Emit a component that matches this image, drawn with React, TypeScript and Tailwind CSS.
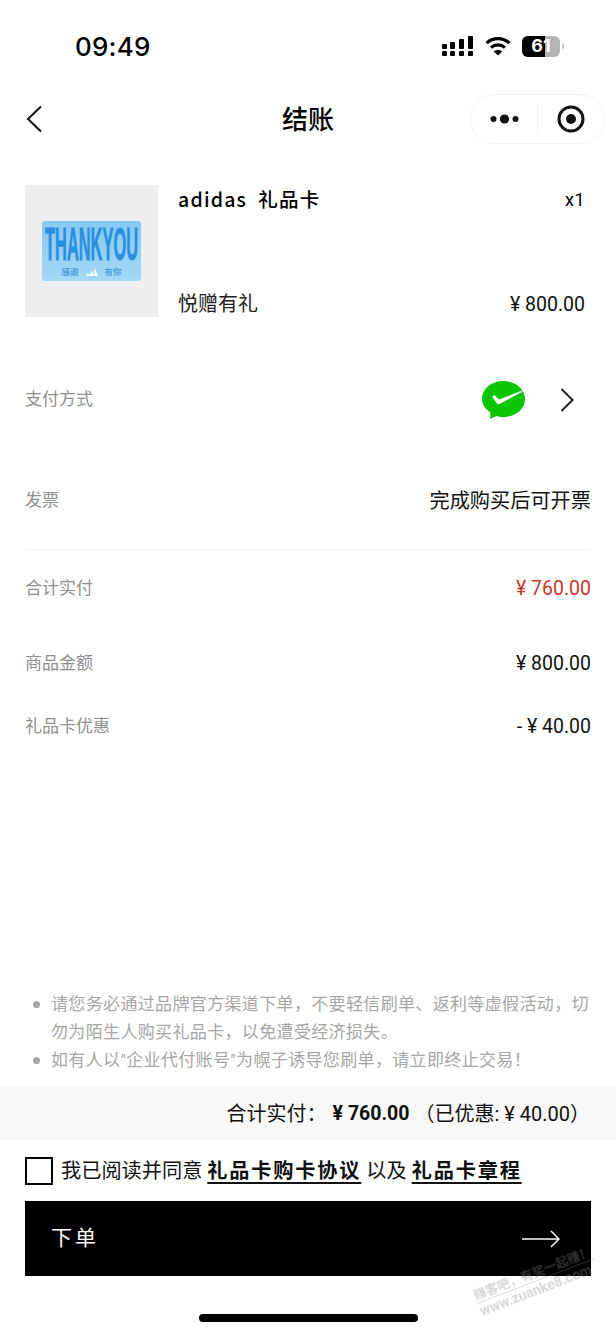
import React from 'react';

const StatusIcons = () => (
	<div className="flex items-center">
		<svg width="31" height="21" viewBox="0 0 31 21" fill="#000">
			<rect x="0" y="8" width="5" height="5" rx="1" />
			<rect x="0" y="15" width="5" height="5" rx="1" />
			<rect x="8" y="6" width="5" height="7" rx="1" />
			<rect x="8" y="15" width="5" height="5" rx="1" />
			<rect x="17" y="3" width="5" height="10" rx="1" />
			<rect x="17" y="15" width="5" height="5" rx="1" />
			<rect x="26" y="0" width="5" height="13" rx="1" />
			<rect x="26" y="15" width="5" height="5" rx="1" />
		</svg>
		<svg className="ml-[12px]" width="26" height="20" viewBox="0 0 26 20" fill="none" stroke="#000" strokeWidth="3.2">
			<path d="M1.5 7.2C8 1 18 1 24.5 7.2" />
			<path d="M6 11.6C10 8 16 8 20 11.6" />
			<path d="M13 19.5 L8.8 15.4C11 13.4 15 13.4 17.2 15.4Z" fill="#000" stroke="none" />
		</svg>
		<div className="flex items-center ml-[11px]">
			<div className="relative w-[38px] h-[21px] rounded-[6px] bg-[#b5b5b5] overflow-hidden">
				<div className="h-full w-[23px] bg-black" />
				<span className="absolute inset-0 flex items-center justify-center text-white text-[18px] leading-none font-bold font-['Inter',sans-serif]">
					61
				</span>
			</div>
			<div className="w-[2px] h-[6px] rounded-r-full bg-[#c4c4c4] ml-[2px]" />
		</div>
	</div>
);

const Row = ({ label, children, className }: { label: string; children: React.ReactNode; className: string }) => (
	<div className={`flex items-center justify-between ${className}`}>
		<span className="text-[17px] text-[#8f8f8f]">{label}</span>
		{children}
	</div>
);

const Amount = ({ children, className = 'text-[#111]' }: { children: React.ReactNode; className?: string }) => (
	<span className={`text-[19.5px] font-['Roboto',sans-serif] ${className}`}>{children}</span>
);

export default function App() {
	return (
		<div className="relative w-[616px] h-[1334px] bg-white flex flex-col overflow-hidden text-black font-['Roboto','Noto_Sans_CJK_SC',sans-serif]">
			{/* status bar */}
			<div className="h-[92px] flex items-center justify-between pl-[75px] pr-[52px] shrink-0">
				<span className="text-[26px] font-medium tracking-[0.2px] font-['Inter',sans-serif]">09:49</span>
				<StatusIcons />
			</div>

			{/* nav */}
			<div className="relative h-[54px] flex items-center justify-center shrink-0">
				<svg className="absolute left-[25px] top-[13px]" width="18" height="28" viewBox="0 0 18 28" fill="none" stroke="#111" strokeWidth="2">
					<path d="M16 1.5 L3 14 L16 26.5" />
				</svg>
				<span className="text-[26px] font-medium mt-[3px]">结账</span>
				<div className="absolute right-[11px] top-[2px] w-[135px] h-[50px] rounded-full border border-[#f2f2f2] flex items-center">
					<svg className="ml-[19px]" width="30" height="12" viewBox="0 0 30 12" fill="#111">
						<circle cx="3.5" cy="6" r="3" />
						<circle cx="14.5" cy="6" r="4.6" />
						<circle cx="25.5" cy="6" r="3" />
					</svg>
					<div className="w-px h-[30px] bg-[#f0f0f0] ml-[17px]" />
					<svg className="ml-[19px]" width="28" height="28" viewBox="0 0 28 28">
						<circle cx="14" cy="14" r="12" fill="none" stroke="#111" strokeWidth="3" />
						<circle cx="14" cy="14" r="5" fill="#111" />
					</svg>
				</div>
			</div>

			{/* product */}
			<div className="mt-[39px] h-[132px] flex pl-[25px] pr-[31px] shrink-0">
				<div className="w-[133px] h-[132px] bg-[#edeef0] flex items-center justify-center shrink-0">
					<div className="w-[99px] h-[60px] rounded-[3px] bg-gradient-to-b from-[#85c9f2] to-[#a4d8f6] flex flex-col items-center overflow-hidden">
						<svg width="99" height="43" viewBox="0 0 99 43">
							<text
								x="3"
								y="39"
								fontSize="47"
								fontWeight="700"
								fontFamily="Liberation Sans, sans-serif"
								fill="#2a8fdf"
								stroke="#2a8fdf"
								strokeWidth="0.8"
								textLength="93"
								lengthAdjust="spacingAndGlyphs"
							>
								THANKYOU
							</text>
						</svg>
						<div className="flex items-center gap-[7px] text-[8.5px] leading-[10px] font-bold text-[#4a9fe0] mt-[3px]">
							<span>感谢</span>
							<svg width="12" height="8" viewBox="0 0 12 8" fill="#fff">
								<path d="M0 8 L1.8 5 L4 8Z M3.6 8 L6 2.5 L8.2 8Z M7.6 8 L8.6 0 L12 8Z" />
							</svg>
							<span>有你</span>
						</div>
					</div>
				</div>
				<div className="flex-1 ml-[20px] flex flex-col justify-between">
					<div className="flex items-start justify-between">
						<span className="text-[19.5px] leading-[28px] font-medium tracking-[1.2px] font-['Noto_Sans_CJK_SC',sans-serif]">
							adidas&nbsp; 礼品卡
						</span>
						<span className="text-[18px] leading-[30px] tracking-[0.5px]">x1</span>
					</div>
					<div className="flex items-end justify-between -mb-[2px]">
						<span className="text-[20px] leading-[29px] text-[#222]">悦赠有礼</span>
						<Amount>¥ 800.00</Amount>
					</div>
				</div>
			</div>

			{/* rows */}
			<div className="pl-[25px] pr-[25px] shrink-0">
				<Row label="支付方式" className="mt-[58px] h-[50px]">
					<div className="flex items-center gap-[35px] pr-[17px]">
						<svg width="43" height="38" viewBox="0 0 43 38">
							<path d="M21.5 0C33.5 0 43 8 43 18C43 28 33.5 36 21.5 36C19 36 16.5 35.6 14.5 35L8 38L8.5 31.5C3.5 28 0 23.5 0 18C0 8 9.5 0 21.5 0Z" fill="#09c502" />
							<path d="M10 15.5L12.5 14L17 18.5L40 9.5L40 11L17.5 23C16.5 23.5 15.5 23.5 15 22.5Z" fill="#fff" />
						</svg>
						<svg width="14" height="24" viewBox="0 0 14 24" fill="none" stroke="#222" strokeWidth="2">
							<path d="M1.5 1 L12.5 12 L1.5 23" />
						</svg>
					</div>
				</Row>
				<Row label="发票" className="mt-[51px] h-[50px]">
					<span className="text-[20.2px] text-[#111]">完成购买后可开票</span>
				</Row>
				<div className="mt-[23px] h-px bg-[#f5f5f5]" />
				<Row label="合计实付" className="mt-[19px] h-[40px]">
					<Amount className="text-[#c8372d]">¥ 760.00</Amount>
				</Row>
				<Row label="商品金额" className="mt-[35px] h-[40px]">
					<Amount>¥ 800.00</Amount>
				</Row>
				<Row label="礼品卡优惠" className="mt-[23px] h-[40px]">
					<Amount>- ¥ 40.00</Amount>
				</Row>
			</div>

			{/* bottom */}
			<div className="mt-auto shrink-0">
				<ul className="pl-[51px] pr-[25px] pb-[13px] text-[17px] leading-[28px] tracking-[0.35px] text-[#a6a6a6]">
					<li className="relative">
						<span className="absolute -left-[18px] top-[11px] w-[7px] h-[7px] rounded-full bg-[#a6a6a6]" />
						请您务必通过品牌官方渠道下单，不要轻信刷单、返利等虚假活动，切勿为陌生人购买礼品卡，以免遭受经济损失。
					</li>
					<li className="relative">
						<span className="absolute -left-[18px] top-[11px] w-[7px] h-[7px] rounded-full bg-[#a6a6a6]" />
						如有人以"企业代付账号"为幌子诱导您刷单，请立即终止交易！
					</li>
				</ul>
				<div className="h-[53px] bg-[#f8f8f8] flex items-center justify-end pr-[26px] pt-[1px] text-[20px] text-[#111]">
					<span>合计实付：</span>
					<span className="font-bold ml-[6px] text-[19.5px]">¥ 760.00</span>
					<span className="ml-[5px]">（已优惠: ¥ 40.00）</span>
				</div>
				<div className="h-[61px] flex items-center pl-[25px]">
					<div className="w-[28px] h-[28px] border-2 border-black" />
					<div className="ml-[8px] pt-[1px] text-[20.2px] text-[#111] whitespace-nowrap">
						我已阅读并同意{' '}
						<span className="font-bold tracking-[1.8px] underline decoration-2 underline-offset-[4px]">礼品卡购卡协议</span>{' '}
						以及{' '}
						<span className="font-bold tracking-[1.8px] underline decoration-2 underline-offset-[4px]">礼品卡章程</span>
					</div>
				</div>
				<div className="mx-[25px] h-[75px] bg-black flex items-center justify-between pl-[26px] pr-[31px]">
					<span className="text-white text-[21px] tracking-[3px]">下单</span>
					<svg width="38" height="18" viewBox="0 0 38 18" fill="none" stroke="#fff" strokeWidth="1.5">
						<path d="M0 9 H37 M29 1 L37 9 L29 17" />
					</svg>
				</div>
				<div className="h-[58px] flex items-start justify-center pt-[38px]">
					<div className="w-[219px] h-[8px] rounded-full bg-black" />
				</div>
			</div>

			{/* watermark */}
			<div className="absolute left-[472px] top-[1290px] origin-top-left -rotate-[21deg] text-[#8a8a8a]/35 font-bold whitespace-nowrap blur-[0.5px]">
				<div className="text-[12.5px] leading-[14px] border-b border-[#8a8a8a]/30">赚客吧，有奖一起赚！</div>
				<div className="text-[14px] leading-[17px]">www.zuanke8.com</div>
			</div>
		</div>
	);
}
